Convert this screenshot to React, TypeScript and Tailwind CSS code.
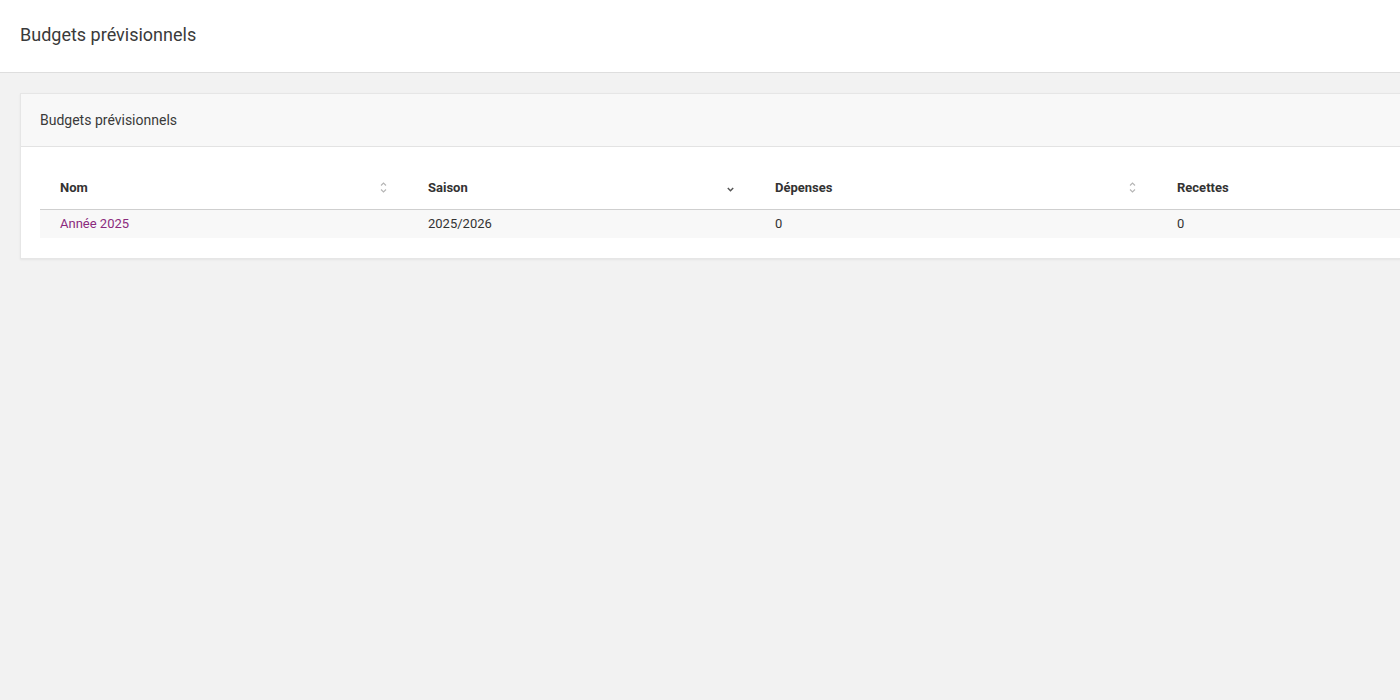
const columns = [
  { label: "Nom", width: "w-[368px]", sort: "both" },
  { label: "Saison", width: "w-[347px]", sort: "desc" },
  { label: "Dépenses", width: "w-[402px]", sort: "both" },
  { label: "Recettes", width: "w-[402px]", sort: "both" },
];

function SortIcon({ kind }: { kind: string }) {
  if (kind === "desc") {
    return (
      <svg width="9" height="10" viewBox="0 0 9 10" className="text-[#555] mt-[2px]">
        <path d="M1.8 4 L4.5 6.7 L7.2 4" fill="none" stroke="currentColor" strokeWidth="1.5" />
      </svg>
    );
  }
  return (
    <svg width="9" height="13" viewBox="0 0 9 13" className="text-[#b5b5b5]">
      <path d="M2 4.5 L4.5 2 L7 4.5" fill="none" stroke="currentColor" strokeWidth="1.1" />
      <path d="M2 8.5 L4.5 11 L7 8.5" fill="none" stroke="currentColor" strokeWidth="1.1" />
    </svg>
  );
}

export default function App() {
  return (
    <div className="w-[1400px] h-[700px] overflow-hidden bg-[#f2f2f2] font-['Roboto',sans-serif] text-[#333]">
      <div className="h-[73px] bg-white border-b border-[#dedede] flex items-center px-5">
        <div className="text-[18px] text-[#3a3a3a] pb-[4px]">Budgets prévisionnels</div>
      </div>
      <div className="pt-5 pl-5">
        <div className="w-[1600px] bg-white border border-[#e6e6e6] shadow-[0_1px_2px_rgba(0,0,0,0.06)]">
          <div className="h-[53px] bg-[#f8f8f8] border-b border-[#e3e3e3] flex items-center px-[19px]">
            <div className="text-[14px] text-[#3a3a3a]">Budgets prévisionnels</div>
          </div>
          <div className="px-[19px] pt-[19px] pb-5">
            <div className="flex h-[44px] border-b border-[#cfcfcf] items-center">
              {columns.map((c) => (
                <div key={c.label} className={`${c.width} flex items-center justify-between px-5`}>
                  <span className="text-[13px] font-bold text-[#333]">{c.label}</span>
                  <SortIcon kind={c.sort} />
                </div>
              ))}
            </div>
            <div className="flex h-[28px] bg-[#f8f8f8] items-center text-[13px]">
              <div className="w-[368px] px-5 text-[#8b2a7d]">Année 2025</div>
              <div className="w-[347px] px-5 text-[#333]">2025/2026</div>
              <div className="w-[402px] px-5 text-[#333]">0</div>
              <div className="w-[402px] px-5 text-[#333]">0</div>
            </div>
          </div>
        </div>
      </div>
    </div>
  );
}
